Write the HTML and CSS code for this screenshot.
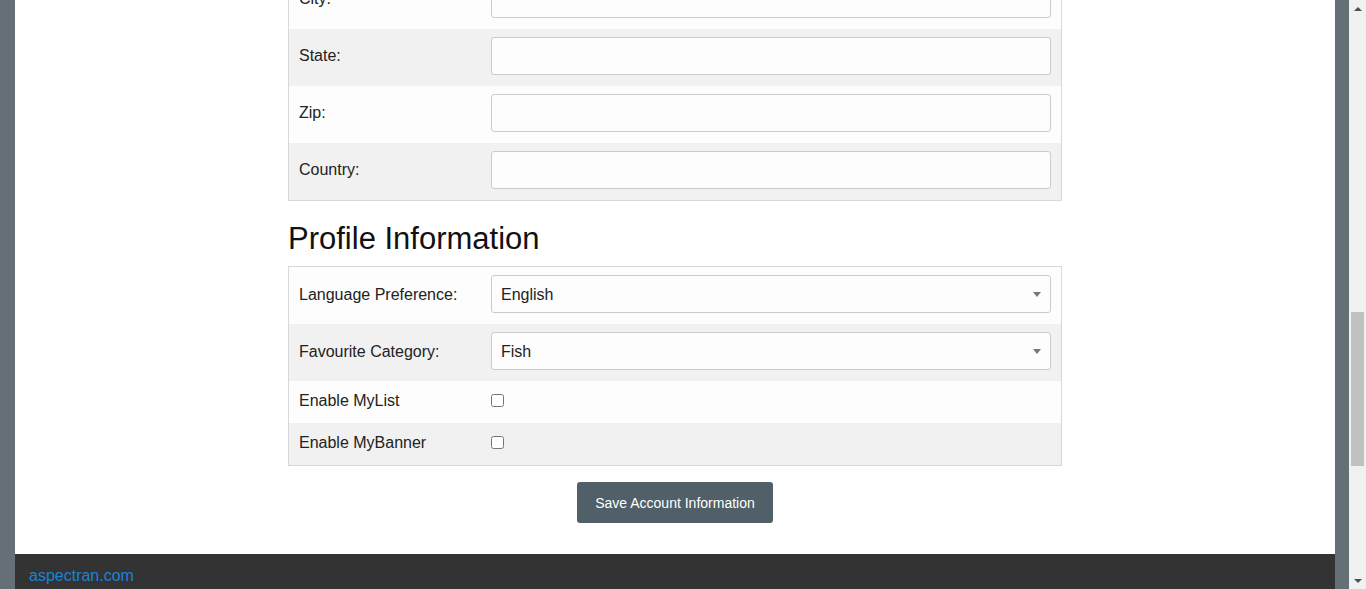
FILE: index.html
```html
<!DOCTYPE html>
<html lang="en">
<head>
<meta charset="utf-8">
<title>JPetStore - Edit Account</title>
<link rel="stylesheet" href="styles.css">
</head>
<body>
<div class="window">
  <div class="viewport">
    <div class="page">
      <main class="content">
        <h2 class="section-title">Account Information</h2>
        <div class="form-table">
          <div class="form-row"><label class="form-label">First name:</label><input class="form-input" type="text" value=""></div>
          <div class="form-row"><label class="form-label">Last name:</label><input class="form-input" type="text" value=""></div>
          <div class="form-row"><label class="form-label">Email:</label><input class="form-input" type="text" value=""></div>
          <div class="form-row"><label class="form-label">Phone:</label><input class="form-input" type="text" value=""></div>
          <div class="form-row"><label class="form-label">Address 1:</label><input class="form-input" type="text" value=""></div>
          <div class="form-row"><label class="form-label">Address 2:</label><input class="form-input" type="text" value=""></div>
          <div class="form-row"><label class="form-label">City:</label><input class="form-input" type="text" value=""></div>
          <div class="form-row"><label class="form-label">State:</label><input class="form-input" type="text" value=""></div>
          <div class="form-row"><label class="form-label">Zip:</label><input class="form-input" type="text" value=""></div>
          <div class="form-row"><label class="form-label">Country:</label><input class="form-input" type="text" value=""></div>
        </div>

        <h2 class="section-title">Profile Information</h2>
        <div class="form-table">
          <div class="form-row select-row"><label class="form-label">Language Preference:</label>
            <span class="select-wrap"><select class="form-select"><option>English</option><option>Japanese</option></select></span>
          </div>
          <div class="form-row select-row"><label class="form-label">Favourite Category:</label>
            <span class="select-wrap"><select class="form-select"><option>Fish</option><option>Dogs</option><option>Reptiles</option><option>Cats</option><option>Birds</option></select></span>
          </div>
          <div class="form-row check-row"><label class="form-label">Enable MyList</label><span class="check-cell"><input class="form-check" type="checkbox"></span></div>
          <div class="form-row check-row"><label class="form-label">Enable MyBanner</label><span class="check-cell"><input class="form-check" type="checkbox"></span></div>
        </div>

        <div class="actions">
          <button class="btn-save" type="button">Save Account Information</button>
        </div>
      </main>
      <footer class="footer">
        <a class="footer-link" href="#">aspectran.com</a>
      </footer>
    </div>
  </div>
  <div class="scrollbar">
    <span class="sb-btn"><span class="sb-arrow up"></span></span>
    <div class="sb-track"><div class="sb-thumb"></div></div>
    <span class="sb-btn"><span class="sb-arrow down"></span></span>
  </div>
</div>
</body>
</html>
```

FILE: styles.css
```css
html, body {
  margin: 0;
  padding: 0;
  height: 100%;
  overflow: hidden;
}

body {
  font-family: "Liberation Sans", Arial, sans-serif;
  font-size: 16px;
  color: #222;
}

.window {
  display: flex;
  height: 589px;
  background: #646f76;
}

.viewport {
  flex: 1;
  display: flex;
  flex-direction: column;
  justify-content: flex-end;
  overflow: hidden;
  padding: 0 14px 0 15px;
}

.page {
  flex: none;
  width: 1320px;
  background: #fff;
  display: flex;
  flex-direction: column;
}

.content {
  width: 774px;
  margin: 0 auto;
  padding-bottom: 31px;
}

.section-title {
  font-size: 31px;
  font-weight: normal;
  line-height: 37px;
  color: #111;
  margin: 19px 0 9px;
}

.form-table {
  border: 1px solid #d8d8d8;
}

.form-row {
  display: grid;
  grid-template-columns: 192px 1fr;
  align-items: center;
  padding: 8px 10px 11px;
  background: #fdfdfd;
}

.form-row:nth-child(even) {
  background: #f1f1f1;
}

.form-label {
  line-height: 24px;
  color: #222;
}

.select-row .form-label {
  padding-top: 2px;
}

.form-input,
.form-select {
  display: block;
  box-sizing: border-box;
  width: 100%;
  height: 38px;
  margin: 0;
  padding: 0 9px;
  border: 1px solid #cbcbcb;
  border-radius: 3px;
  background: #fdfdfd;
  font-family: inherit;
  font-size: 16px;
  color: #222;
}

.select-wrap {
  position: relative;
  display: block;
}

.form-select {
  appearance: none;
  -webkit-appearance: none;
}

.select-wrap::after {
  content: "";
  position: absolute;
  right: 10px;
  top: 17px;
  border-left: 4px solid transparent;
  border-right: 4px solid transparent;
  border-top: 5px solid #777;
  pointer-events: none;
}

.check-row .form-label {
  line-height: 23px;
}

.check-cell {
  display: flex;
  align-items: center;
}

.form-check {
  width: 13px;
  height: 13px;
  margin: 0;
}

.actions {
  display: flex;
  justify-content: center;
  margin-top: 16px;
}

.btn-save {
  height: 41px;
  padding: 0 18px;
  border: none;
  border-radius: 3px;
  background: #505f68;
  color: #fff;
  font-family: inherit;
  font-size: 14px;
}

.footer {
  box-sizing: border-box;
  height: 35px;
  background: #333;
  padding: 10px 14px 0;
  line-height: 24px;
}

.footer-link {
  color: #1a82d6;
  text-decoration: none;
  font-size: 16px;
}

.scrollbar {
  width: 17px;
  flex: none;
  display: flex;
  flex-direction: column;
  background: #f1f1f1;
}

.sb-btn {
  height: 17px;
  display: flex;
  align-items: center;
  justify-content: center;
}

.sb-arrow {
  width: 0;
  height: 0;
  border-left: 4px solid transparent;
  border-right: 4px solid transparent;
}

.sb-arrow.up {
  border-bottom: 4px solid #505050;
}

.sb-arrow.down {
  border-top: 4px solid #505050;
}

.sb-track {
  flex: 1;
}

.sb-thumb {
  margin: 295px 2px 0;
  height: 154px;
  background: #c1c1c1;
}
```
